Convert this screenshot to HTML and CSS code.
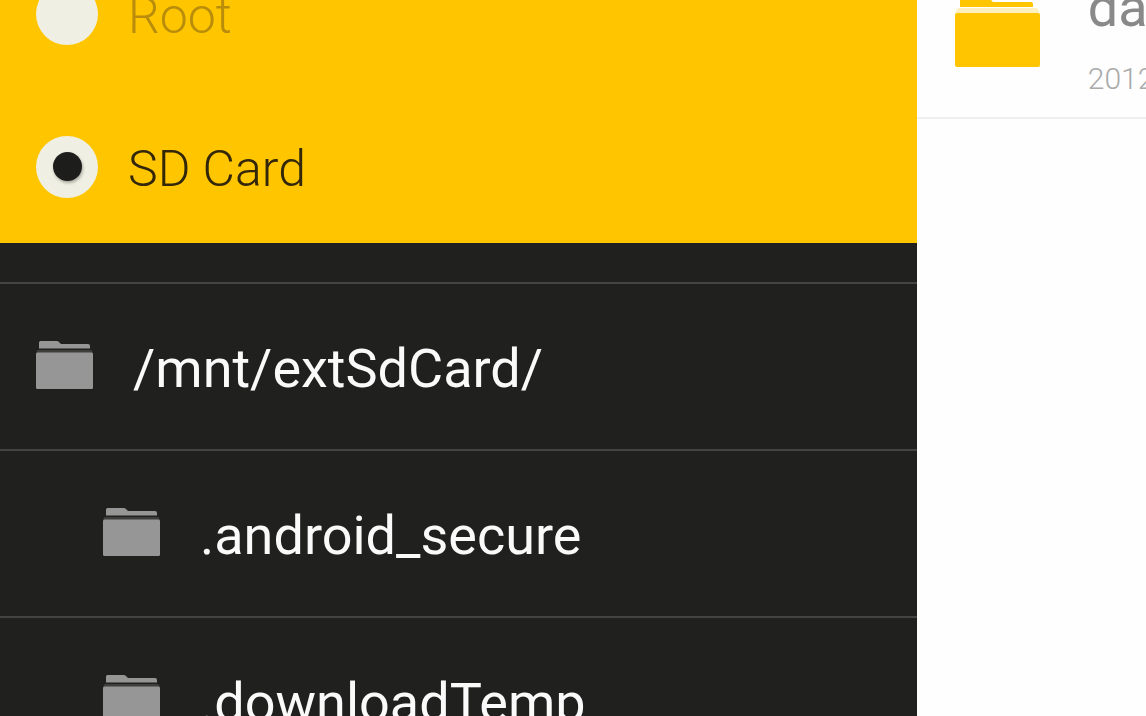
FILE: index.html
```html
<!DOCTYPE html>
<html lang="en">
<head>
<meta charset="utf-8">
<title>Files</title>
<link rel="stylesheet" href="styles.css">
</head>
<body>
<svg class="sprite" aria-hidden="true">
  <symbol id="folder" viewBox="0 0 57 48">
    <path d="M3 7.500V1.500Q3 0 4.500 0H21Q22.500 0 23.500 1.500L25 3H52Q54 3 54 5V7.500Z"/>
    <path opacity=".25" d="M1.500 9H55.500L57 12H0Z"/>
    <path d="M1.500 11.500H55.500Q57 11.500 57 13V46.500Q57 48 55.500 48H1.500Q0 48 0 46.500V13Q0 11.500 1.500 11.500Z"/>
  </symbol>
  <symbol id="folder-large" viewBox="0 0 85 71">
    <path d="M5 11V2Q5 0 7 0H31Q33 0 34 2L38 6H76Q78 6 78 8V11Z"/>
    <path opacity=".25" d="M3 12H82L85 17H0Z"/>
    <path d="M2 17H83Q85 17 85 19V69Q85 71 83 71H2Q0 71 0 69V19Q0 17 2 17Z"/>
  </symbol>
</svg>
<div class="app">
  <nav class="drawer">
    <div class="storage">
      <label class="option muted"><input class="radio" type="radio" name="storage" value="root"><span>Root</span></label>
      <label class="option"><input class="radio" type="radio" name="storage" value="sd" checked><span>SD Card</span></label>
    </div>
    <div class="tree">
      <a class="node" href="#"><svg class="icon" aria-hidden="true"><use href="#folder"/></svg><span>/mnt/extSdCard/</span></a>
      <a class="node child" href="#"><svg class="icon" aria-hidden="true"><use href="#folder"/></svg><span>.android_secure</span></a>
      <a class="node child" href="#"><svg class="icon" aria-hidden="true"><use href="#folder"/></svg><span>.downloadTemp</span></a>
    </div>
  </nav>
  <main class="files">
    <a class="file" href="#">
      <svg class="file-icon" aria-hidden="true"><use href="#folder-large"/></svg>
      <span class="file-text"><span class="file-name">da</span><span class="file-date">2012</span></span>
    </a>
  </main>
</div>
</body>
</html>
```
FILE: styles.css
```css
* { box-sizing: border-box; }

body {
  margin: 0;
  background: #fefefe;
  font-family: Roboto, "Liberation Sans", sans-serif;
}

.sprite { display: none; }

.app {
  display: grid;
  grid-template-columns: 80% 20%;
  height: 100vh;
  overflow: hidden;
}

.drawer {
  background: #20201f;
  overflow: hidden;
}

/* The list is scrolled part way past its first option. */
.storage {
  margin-top: -63px;
  background: #ffc600;
}

.option {
  display: flex;
  align-items: center;
  gap: 30px;
  height: 153px;
  padding-left: 36px;
  color: #33270a;
  font-size: 50px;
  font-weight: 300;
  line-height: 60px;
}

.option span { padding-top: 4px; }

.muted { color: #b98d0b; }

.radio {
  appearance: none;
  flex: none;
  display: grid;
  place-items: center;
  width: 62px;
  height: 62px;
  margin: 0;
  border-radius: 50%;
  background: #f0efe3;
}

.radio:checked::before {
  content: "";
  width: 29px;
  height: 29px;
  border-radius: 50%;
  background: #1d1d1c;
  box-shadow: 1px 2px 3px #a9a9a0;
}

.tree { padding-top: 39px; }

.node {
  display: flex;
  align-items: flex-start;
  gap: 40px;
  height: 167px;
  padding: 57px 0 0 36px;
  border-top: 2px solid #444443;
  color: #fafafa;
  font-size: 54px;
  line-height: 56px;
  text-decoration: none;
}

.child { padding-left: 103px; }

.icon {
  flex: none;
  width: 57px;
  height: 48px;
  fill: #969696;
}

.files { overflow: hidden; }

.file {
  display: flex;
  align-items: flex-start;
  gap: 48px;
  margin-top: -34px;
  padding: 30px 0 18px 38px;
  border-bottom: 2px solid #f0f0f0;
  text-decoration: none;
}

.file-icon {
  flex: none;
  width: 85px;
  height: 71px;
  fill: #ffc600;
}

.file-text {
  display: flex;
  flex-direction: column;
}

.file-name {
  color: #898989;
  font-size: 54px;
  line-height: 64px;
  margin-top: -20px;
}

.file-date {
  margin-top: 19px;
  color: #aaaaaa;
  font-size: 30px;
  font-weight: 300;
  line-height: 40px;
}
```
